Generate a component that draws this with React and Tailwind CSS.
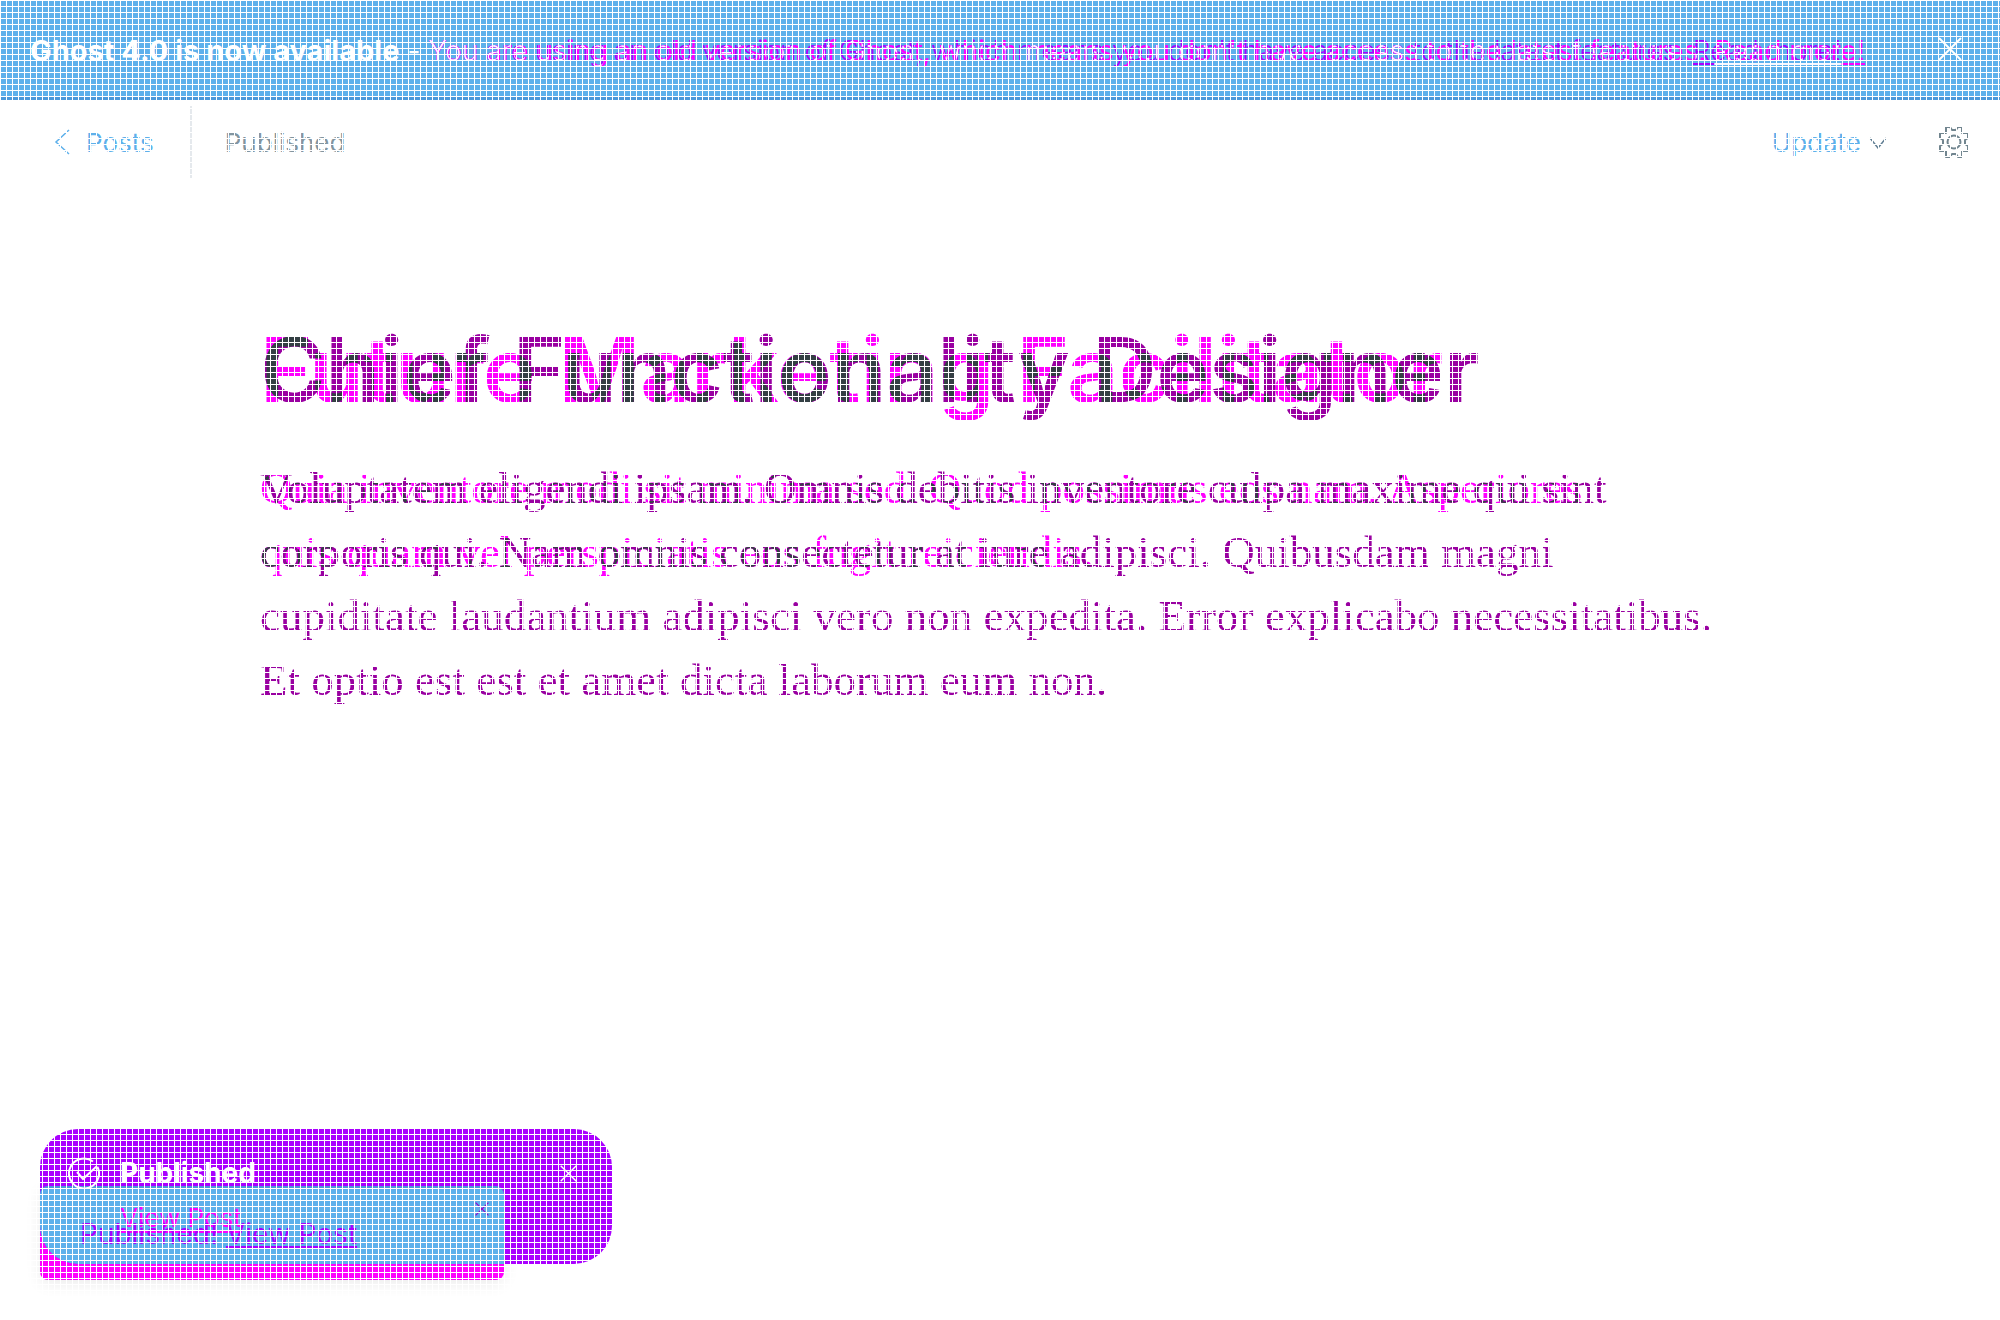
function Filters() {
  return (
    <svg className="absolute size-0" aria-hidden="true">
      <filter id="page-text" colorInterpolationFilters="sRGB" x="0" y="0" width="1" height="1">
        <feColorMatrix
          type="matrix"
          values="0.396 0.796 -0.396 0 0.204
                  -0.247 -0.247 1.247 0 0.247
                  0.363 0.733 -0.363 0 0.267
                  0 0 0 1 0"
        />
      </filter>
      <filter id="banner-text" colorInterpolationFilters="sRGB" x="0" y="0" width="1" height="1">
        <feColorMatrix
          type="matrix"
          values="-0.303 0.03 -0.332 0 0.97
                  -0.97 -0.97 1.66 0 0.97
                  0 0 -0.078 0 1
                  0 0 0 1 0"
        />
      </filter>
    </svg>
  );
}

/* Two revisions of one text in the same cell; a filter recolours where they differ. */
function Revisions({ as: Tag = "div", className, before, after, afterClass = "" }) {
  return (
    <div className={className}>
      <Tag className="col-start-1 row-start-1 text-[#00ff00] mix-blend-multiply">{before}</Tag>
      <Tag className={"col-start-1 row-start-1 text-[#ff0000] mix-blend-multiply " + afterClass}>{after}</Tag>
    </div>
  );
}

function Cross({ className }) {
  return (
    <svg viewBox="0 0 24 24" className={className} fill="none" stroke="currentColor" strokeWidth="2" aria-hidden="true">
      <path d="M1 1 23 23M23 1 1 23" />
    </svg>
  );
}

function BannerText() {
  return (
    <>
      You are using an old version of Ghost, which means you don't have access to the latest features.{" "}
      <a href="#more" className="underline decoration-2 underline-offset-2">Read more!</a>
    </>
  );
}

function Banner() {
  return (
    <aside className="flex h-[100px] items-center border-b-3 border-[#4a98da] bg-[#5db0eb] pt-1 pr-[38px] pl-[30px] text-[28px] leading-9 whitespace-nowrap text-white">
      <span className="text-[29px] font-bold">Ghost 4.0 is now available</span>
      <span className="px-2">-</span>
      <Revisions
        className="grid bg-white [filter:url(#banner-text)]"
        afterClass="font-light"
        before={<BannerText />}
        after={<BannerText />}
      />
      <button type="button" aria-label="Close banner" className="mb-1 ml-auto">
        <Cross className="size-6" />
      </button>
    </aside>
  );
}

function Header() {
  return (
    <header className="flex h-[84px] items-center pr-[30px] pl-[54px] text-[26px] leading-8">
      <a href="#posts" className="flex items-center gap-4 text-[#5db0eb]">
        <svg viewBox="0 0 16 26" className="h-[26px] w-4" fill="none" stroke="currentColor" strokeWidth="1.5" aria-hidden="true">
          <path d="M15 1 2 13l13 12" />
        </svg>
        <span className="pt-0.5">Posts</span>
      </a>
      <span className="ml-9 h-[72px] w-0.5 bg-[#e5e9ed]" />
      <span className="ml-[33px] pt-0.5 text-[#8295a0]">Published</span>
      <button type="button" className="ml-auto flex items-center gap-2 pt-0.5 text-[#5db0eb]">
        Update
        <svg viewBox="0 0 18 12" className="h-3 w-[18px] text-[#5f7d92]" fill="none" stroke="currentColor" strokeWidth="1.5" aria-hidden="true">
          <path d="m1 1 8 10 8-10" />
        </svg>
      </button>
      <button type="button" aria-label="Settings" className="ml-[51px] text-[#71858f]">
        <svg viewBox="0 0 32 32" className="size-8" fill="none" stroke="currentColor" strokeWidth="2" strokeLinejoin="round" aria-hidden="true">
          <path d="M8 1h4l2 3h4l2-3h4v6h6v5l-3 2v4l3 2v5h-6v6h-4l-2-3h-4l-2 3H8v-6H2v-5l3-2v-4l-3-2V7h6z" />
          <circle cx="16" cy="16" r="6.5" />
        </svg>
      </button>
    </header>
  );
}

function Editor() {
  return (
    <main className="px-[13%] pt-[138px]">
      <Revisions
        as="h1"
        className="grid bg-white text-[89px] leading-24 font-semibold whitespace-nowrap [filter:url(#page-text)]"
        before="Future Marketing Facilitator"
        after="Chief Functionality Designer"
      />
      <Revisions
        as="p"
        className="mt-[38px] grid bg-white font-['Liberation_Serif',serif] text-[45px] leading-16 whitespace-nowrap [filter:url(#page-text)]"
        before={
          <>
            Quia inventore modi sit minima sed. Quod possimus eos nam. Asperiores
            <br />
            quis quam vel perspiciatis eos fugit reiciendis.
          </>
        }
        after={
          <>
            Voluptatem eligendi ipsam. Omnis debitis inventore culpa maxime qui sint
            <br />
            corporis qui. Nam omnis consectetur at iure adipisci. Quibusdam magni
            <br />
            cupiditate laudantium adipisci vero non expedita. Error explicabo necessitatibus.
            <br />
            Et optio est est et amet dicta laborum eum non.
          </>
        }
      />
    </main>
  );
}

function Toasts() {
  return (
    <section aria-label="Notifications" className="fixed bottom-10 left-10 h-[151px] w-[572px]">
      <div className="absolute bottom-0 left-0 h-[94px] w-[464px] rounded-lg bg-[#ff00ff] shadow-[0_4px_16px_rgba(0,0,0,0.08)]" />
      <div className="absolute top-0 left-0 h-[135px] w-[572px] overflow-hidden rounded-[38px] bg-[#aa00ff]">
        <div className="absolute bottom-0 left-0 h-[78px] w-[464px] rounded-t-lg border-t-2 border-[#4a98da] bg-[#5db0eb]" />
      </div>
      <div className="absolute top-0 left-0 w-full pt-6 pr-[35px] pl-7">
        <div className="flex items-center text-[28px] leading-10 font-bold text-white">
          <svg viewBox="0 0 32 32" className="size-8" fill="none" stroke="currentColor" strokeWidth="2" aria-hidden="true">
            <path d="M25 4.500A15 15 0 1 0 29.500 10" />
            <path d="m9 15 6 7L29 9" />
          </svg>
          <span className="ml-5">Published</span>
          <button type="button" aria-label="Close notification" className="ml-auto">
            <Cross className="size-[17px]" />
          </button>
        </div>
        <a href="#view" className="ml-[52px] block w-max text-[26px] leading-[50px] text-[#ff00ff] underline decoration-2 underline-offset-4">
          View Post
        </a>
      </div>
      <p className="absolute bottom-7 left-10 text-[28px] leading-9 text-[#aa00ff]">
        Published!{" "}
        <a href="#post" className="underline decoration-2 underline-offset-2">View Post</a>
      </p>
      <button type="button" aria-label="Dismiss" className="absolute top-[73px] left-[435px] text-[#9900cc]">
        <Cross className="size-[14px]" />
      </button>
    </section>
  );
}

export default function App() {
  return (
    <div className="min-h-screen overflow-hidden bg-white font-['Inter',sans-serif]">
      <Filters />
      <Banner />
      <Header />
      <Editor />
      <Toasts />
      <div className="pointer-events-none fixed inset-0 z-50 bg-[linear-gradient(to_right,white_1px,transparent_1px),linear-gradient(to_bottom,white_1px,transparent_1px)] bg-[size:6px_6px]" />
    </div>
  );
}
